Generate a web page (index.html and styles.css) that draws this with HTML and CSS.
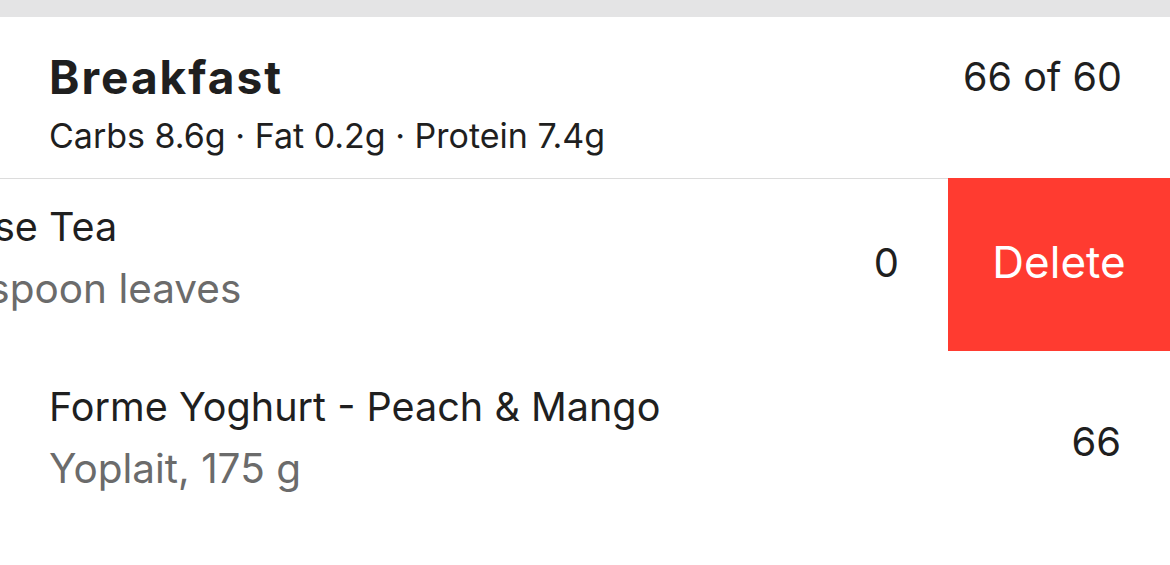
FILE: index.html
```html
<!DOCTYPE html>
<html lang="en">
<head>
<meta charset="utf-8">
<title>Diary</title>
<link rel="stylesheet" href="styles.css">
</head>
<body>
<div class="topbar"></div>
<section class="meal">
  <header class="meal-head">
    <div class="meal-info">
      <div class="meal-name">Breakfast</div>
      <div class="meal-macros">Carbs 8.6g · Fat 0.2g · Protein 7.4g</div>
    </div>
    <div class="meal-total">66 of 60</div>
  </header>
  <div class="swipe">
    <div class="swipe-track">
      <div class="entry entry-swiped">
        <div class="entry-text">
          <div class="entry-name">Pure Loose Tea</div>
          <div class="entry-desc">Try 1 teaspoon leaves</div>
        </div>
        <div class="entry-value">0</div>
      </div>
      <button class="delete-btn">Delete</button>
    </div>
  </div>
  <div class="entry entry-plain">
    <div class="entry-text">
      <div class="entry-name">Forme Yoghurt - Peach &amp; Mango</div>
      <div class="entry-desc">Yoplait, 175 g</div>
    </div>
    <div class="entry-value">66</div>
  </div>
</section>
</body>
</html>
```
FILE: styles.css
```css
* { box-sizing: border-box; }
html, body {
  margin: 0;
  padding: 0;
  background: #ffffff;
}
body {
  width: 1170px;
  height: 565px;
  overflow: hidden;
  font-family: Inter, "Noto Sans", sans-serif;
  color: #1f1f1f;
}
.topbar {
  height: 17px;
  background: #e4e4e5;
}
.meal-head {
  display: flex;
  justify-content: space-between;
  align-items: flex-start;
  padding: 33px 48px 0 49px;
  height: 161px;
}
.meal-name {
  font-size: 46px;
  font-weight: 700;
  line-height: 54px;
  letter-spacing: 2px;
}
.meal-macros {
  margin-top: 10px;
  font-size: 34px;
  line-height: 44px;
}
.meal-total {
  font-size: 39.5px;
  line-height: 54px;
}
.swipe {
  overflow: hidden;
  width: 1170px;
}
.swipe-track {
  display: flex;
  width: 1392px;
  transform: translateX(-222px);
}
.entry {
  display: flex;
  justify-content: space-between;
  align-items: flex-start;
  width: 1170px;
  flex: none;
  padding: 0 49px 0 49px;
  white-space: nowrap;
}
.entry-swiped {
  border-top: 1px solid #dcdcdc;
  height: 173px;
  padding-top: 23px;
}
.entry-swiped .entry-value {
  margin-top: 36px;
}
.entry-plain {
  height: 180px;
  padding-top: 31px;
}
.entry-plain .entry-value {
  margin-top: 35px;
}
.entry-name {
  font-size: 39.6px;
  line-height: 50px;
}
.entry-desc {
  margin-top: 12px;
  font-size: 40.5px;
  line-height: 50px;
  color: #6b6b6b;
}
.entry-value {
  font-size: 40px;
  line-height: 50px;
}
.delete-btn {
  flex: none;
  width: 222px;
  height: 173px;
  margin: 0;
  border: 0;
  border-top: 1px solid #ff3b30;
  padding: 0 0 6px 0;
  background: #ff3b30;
  color: #ffffff;
  font-family: Inter, "Noto Sans", sans-serif;
  font-size: 44px;
  line-height: 50px;
}
```
